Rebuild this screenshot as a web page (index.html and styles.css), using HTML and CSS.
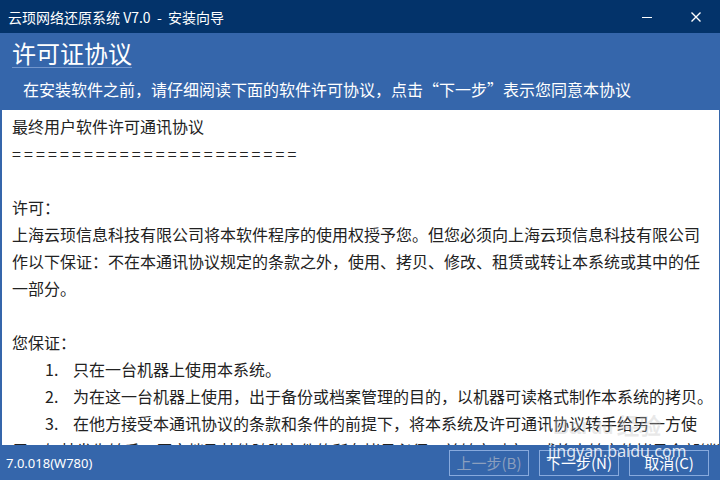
FILE: index.html
```html
<!DOCTYPE html>
<html lang="zh-CN">
<head>
  <meta charset="UTF-8">
  <title>云顼网络还原系统 V7.0 - 安装向导</title>
  <link rel="stylesheet" href="styles.css">
</head>
<body>
  <div class="window">
    <div class="titlebar">
      <span class="title">云顼网络还原系统 V7.0 &nbsp;- &nbsp;安装向导</span>
      <div class="controls">
        <span class="min"></span>
        <svg class="close" width="10" height="10" viewBox="0 0 10 10">
          <path d="M0.5 0.5 L9.5 9.5 M9.5 0.5 L0.5 9.5" stroke="#fff" stroke-width="1.4"/>
        </svg>
      </div>
    </div>

    <div class="header">
      <h1>许可证协议</h1>
      <p>在安装软件之前，请仔细阅读下面的软件许可协议，点击“下一步”表示您同意本协议</p>
    </div>

    <div class="content">
      <div class="license">
        最终用户软件许可通讯协议<br>
        <span class="rule">========================</span><br>
        <br>
        许可：<br>
        上海云顼信息科技有限公司将本软件程序的使用权授予您。但您必须向上海云顼信息科技有限公司<br>
        作以下保证：不在本通讯协议规定的条款之外，使用、拷贝、修改、租赁或转让本系统或其中的任<br>
        一部分。<br>
        <br>
        您保证：<br>
        <span class="num">1.</span>只在一台机器上使用本系统。<br>
        <span class="num">2.</span>为在这一台机器上使用，出于备份或档案管理的目的，以机器可读格式制作本系统的拷贝。<br>
        <span class="num">3.</span>在他方接受本通讯协议的条款和条件的前提下，将本系统及许可通讯协议转手给另一方使<br>
        用，如其发生转手，原文档及其他随附文件的所有拷贝必须一并转交对方，或将未转交的拷贝全部销毁。
      </div>
      <div class="scrollbar"><div class="thumb"></div></div>
    </div>

    <div class="footer">
      <span class="version">7.0.018(W780)</span>
      <div class="buttons">
        <button class="disabled">上一步(B)</button>
        <button>下一步(N)</button>
        <button>取消(C)</button>
      </div>
    </div>

    <div class="watermark">
      <span class="logo">Bai<span class="paw">du</span>经验</span>
      <span class="site">jingyan.baidu.com</span>
    </div>
  </div>
</body>
</html>
```

FILE: styles.css
```css
body {
  margin: 0;
  font-family: "Noto Sans CJK SC", "Noto Sans", sans-serif;
  background-color: #3566ab;
}
.window {
  position: relative;
  width: 720px;
  height: 480px;
  display: flex;
  flex-direction: column;
  overflow: hidden;
  background-color: #3566ab;
}

.titlebar {
  height: 33px;
  flex: none;
  background-color: #03336a;
  color: #fff;
  display: flex;
  align-items: center;
  justify-content: space-between;
  padding-left: 8px;
}
.title {
  font-size: 14px;
}
.controls {
  display: flex;
  align-items: center;
}
.min {
  width: 10px;
  height: 1px;
  background-color: #fff;
  margin-right: 39px;
  margin-top: 2px;
}
.close {
  margin-right: 19px;
}

.header {
  height: 77px;
  flex: none;
  color: #fff;
  padding-left: 12px;
  box-sizing: border-box;
}
.header h1 {
  display: inline-block;
  margin: 0;
  padding-top: 6px;
  font-size: 24px;
  font-weight: normal;
  line-height: 28px;
  border-bottom: 1px solid #7296cc;
}
.header p {
  margin: 11px 0 0 11px;
  font-size: 16px;
  line-height: 20px;
}

.content {
  height: 335px;
  flex: none;
  margin: 0 1px 0 2px;
  background-color: #fff;
  display: flex;
  overflow: hidden;
}
.license {
  flex: 1;
  padding: 3px 0 0 10px;
  font-size: 16px;
  line-height: 27px;
  color: #222;
  white-space: nowrap;
}
.rule {
  letter-spacing: 3.1px;
}
.num {
  display: inline-block;
  width: 28px;
  margin-left: 33px;
}
.scrollbar {
  width: 5px;
  margin-right: 1px;
  flex: none;
}
.thumb {
  height: 58px;
  background-color: #64acdc;
}

.footer {
  flex: 1;
  display: flex;
  align-items: center;
  justify-content: space-between;
  padding: 0 11px 0 6px;
  color: #fff;
}
.version {
  font-family: "Noto Sans", sans-serif;
  font-size: 13px;
}
.buttons {
  display: flex;
  gap: 10px;
}
.buttons button {
  width: 80px;
  height: 26px;
  padding: 0;
  background-color: transparent;
  border: 1px solid #88aadd;
  color: #fff;
  font-family: "Noto Sans CJK SC", sans-serif;
  font-size: 15px;
  line-height: 24px;
}
.buttons button.disabled {
  color: #8b9fbe;
}

.watermark {
  position: absolute;
  left: 548px;
  top: 414px;
  width: 160px;
  pointer-events: none;
}
.logo {
  display: block;
  padding-left: 5px;
  font-family: "Liberation Sans", sans-serif;
  font-size: 22px;
  font-weight: bold;
  line-height: 26px;
  color: rgba(190, 190, 190, 0.35);
}
.paw {
  font-size: 18px;
  padding: 0 4px;
}
.site {
  display: block;
  font-family: "Noto Sans", sans-serif;
  font-size: 16px;
  line-height: 20px;
  color: rgba(255, 255, 255, 0.85);
}
```
